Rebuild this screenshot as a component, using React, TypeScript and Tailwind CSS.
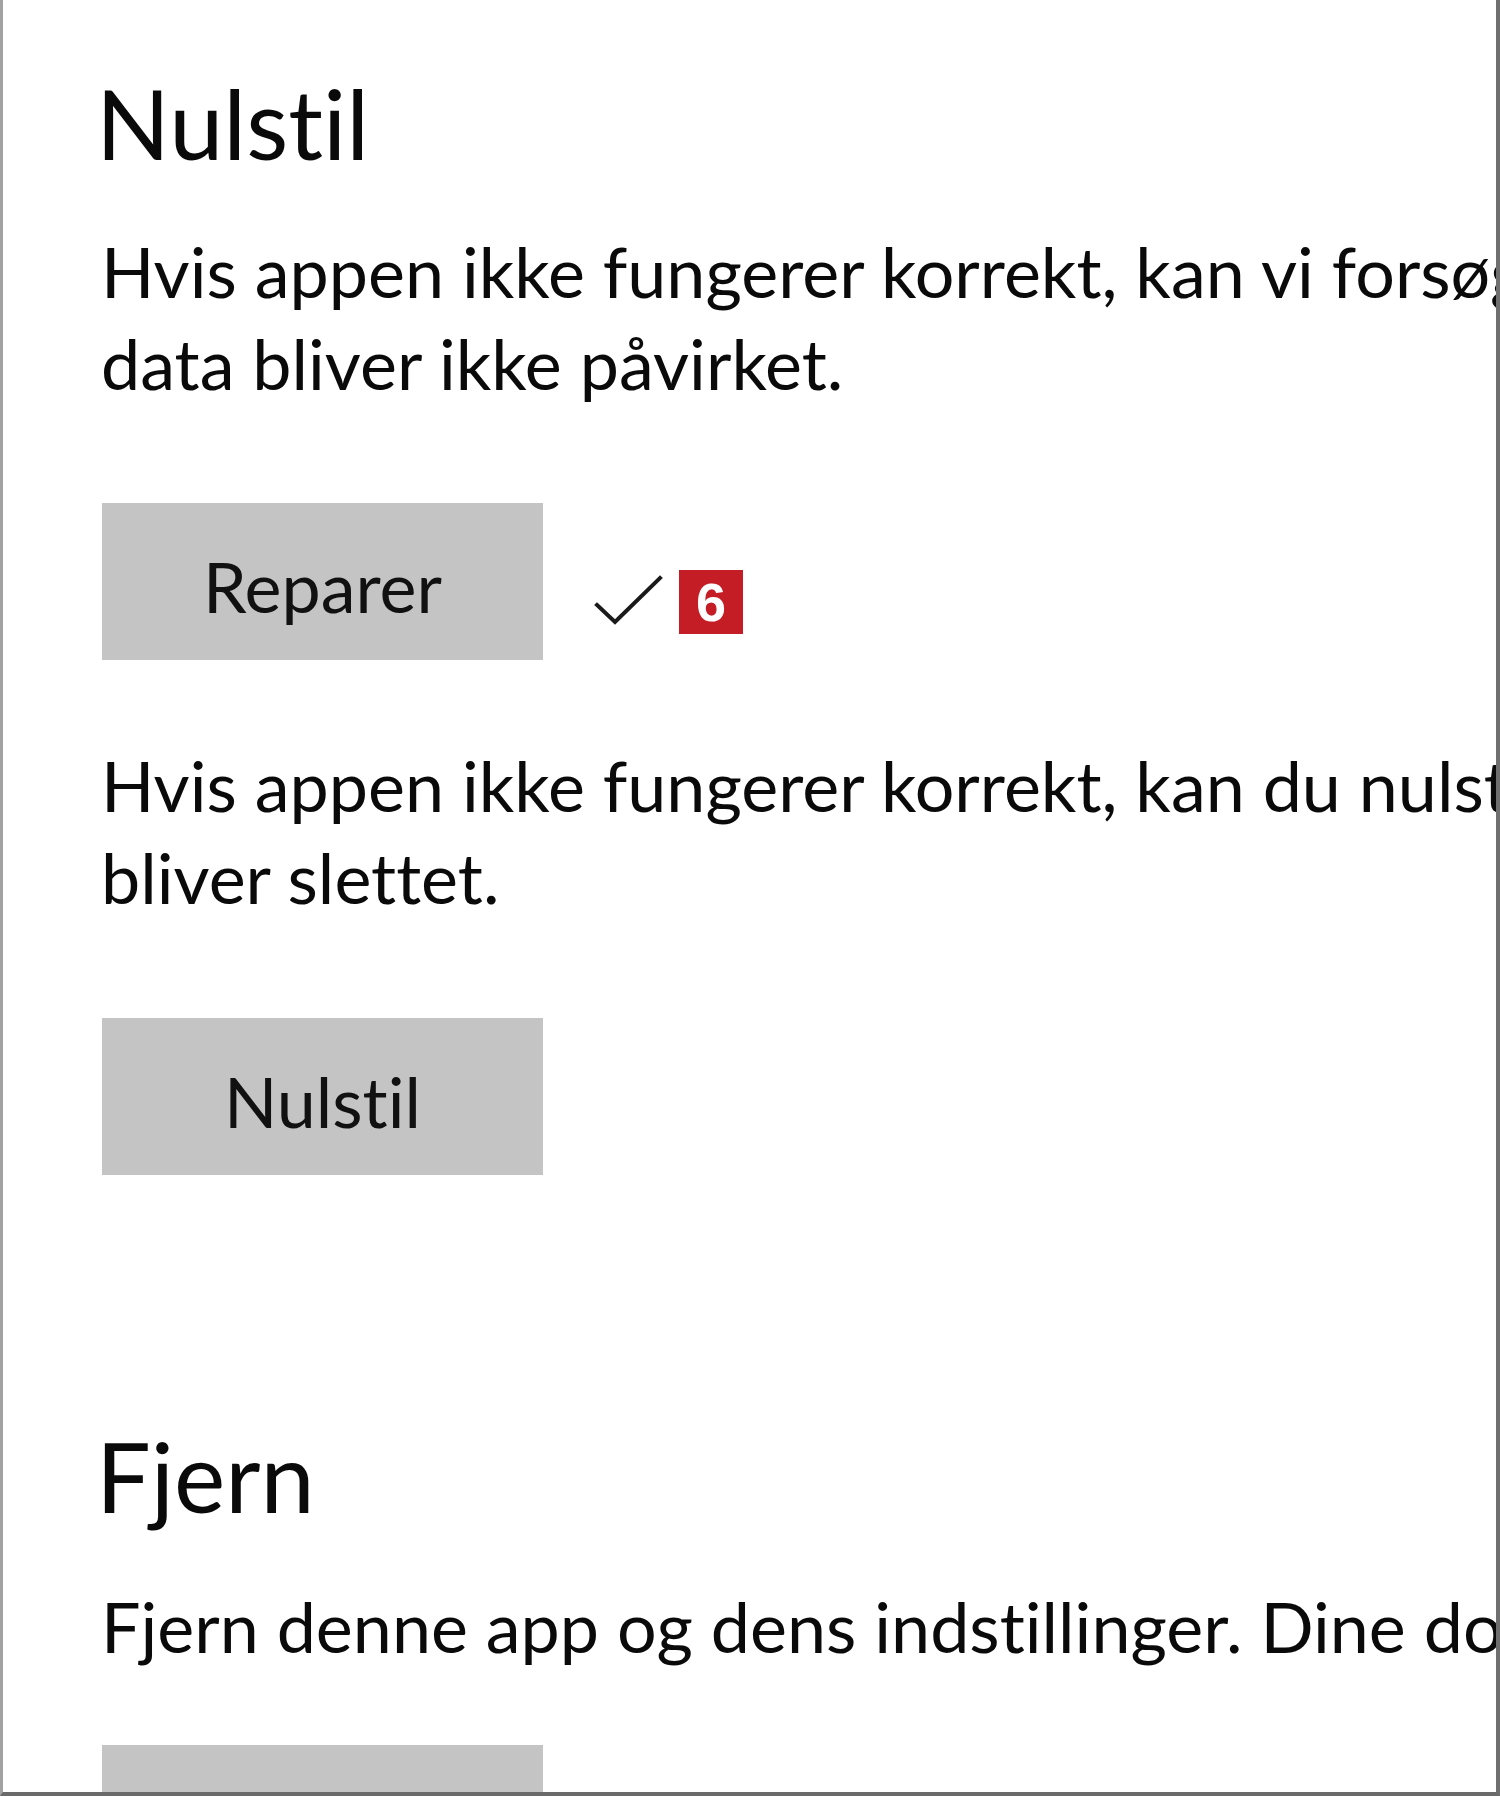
import React from "react";

function GrayButton({ label }: { label: string }) {
  return (
    <div className="ml-[3px] w-[441px] h-[157px] shrink-0 bg-[#c3c4c3] pt-[37px] text-center text-[70px] leading-[92px] text-[#111]">
      {label}
    </div>
  );
}

export default function App() {
  return (
    <div className="w-[1500px] h-[1796px] box-border overflow-hidden bg-white border-l-[3px] border-l-[#a2a2a2] border-r-[4px] border-r-[#6f6f6f] border-b-[4px] border-b-[#6a6a6a] font-['Lato','Open_Sans',sans-serif] [font-variant-ligatures:none] text-[#0a0a0a]">
      <div className="h-full overflow-hidden pl-[96px] pt-[73px]">
        <h1 className="-ml-[3px] text-[97px] leading-[100px] font-normal whitespace-nowrap">Nulstil</h1>

        <p className="mt-[52px] ml-[2px] text-[70px] leading-[92px] whitespace-nowrap">
          Hvis appen ikke fungerer korrekt, kan vi forsøge at reparere den. Appens
          <br />
          data bliver ikke påvirket.
        </p>

        <div className="mt-[94px] flex items-start">
          <GrayButton label="Reparer" />
          <svg className="ml-[51px] mt-[67px] shrink-0" width="70" height="60" viewBox="0 0 70 60" fill="none">
            <path d="M3 35 L21 52 L66 8" stroke="#1a1a1a" strokeWidth="4" strokeLinecap="square" strokeLinejoin="miter" />
          </svg>
          <div className="ml-[15px] mt-[67px] w-[64px] h-[64px] shrink-0 bg-[#c41d25] flex items-center justify-center text-white text-[54px] leading-none font-black font-['Liberation_Sans',sans-serif]">
            6
          </div>
        </div>

        <p className="mt-[79px] ml-[2px] text-[70px] leading-[92px] whitespace-nowrap">
          Hvis appen ikke fungerer korrekt, kan du nulstille den. Appens data
          <br />
          bliver slettet.
        </p>

        <div className="mt-[95px] flex">
          <GrayButton label="Nulstil" />
        </div>

        <h1 className="mt-[251px] -ml-[3px] text-[97px] leading-[100px] font-normal whitespace-nowrap">Fjern</h1>

        <p className="mt-[54px] ml-[2px] text-[70px] leading-[92px] whitespace-nowrap">
          Fjern denne app og dens indstillinger. Dine dokumenter bliver ikke påvirket.
        </p>

        <div className="mt-[73px] flex">
          <GrayButton label="Afinstaller" />
        </div>
      </div>
    </div>
  );
}
